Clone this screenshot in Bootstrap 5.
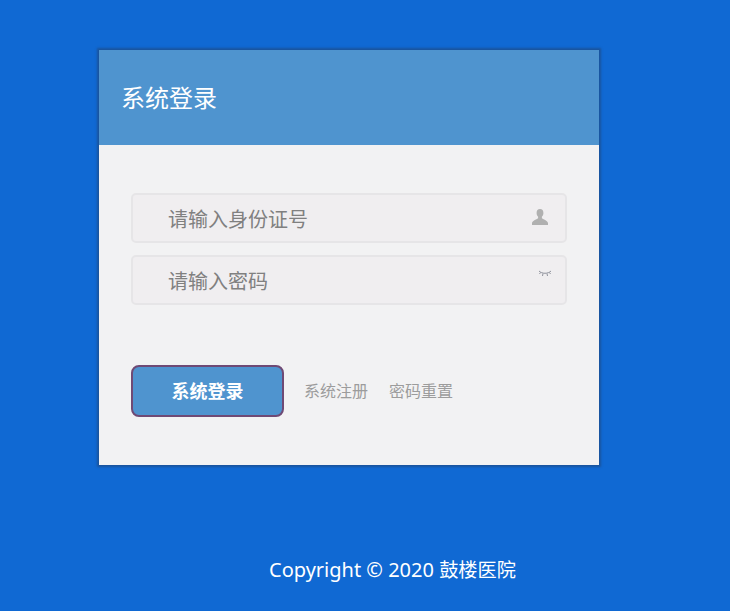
<!DOCTYPE html>
<html lang="zh-CN">
<head>
<meta charset="utf-8">
<title>系统登录</title>
<link rel="stylesheet" href="https://cdn.jsdelivr.net/npm/bootstrap@5.3.0/dist/css/bootstrap.min.css">
<style>
html,body{height:100%;}
body{background:#1069d3;font-family:"Noto Sans","Noto Sans CJK SC",sans-serif;overflow:hidden;}
.login-stage{padding-top:50px;}
.login-panel{width:500px;height:415px;margin-left:99px;background:#f2f2f3;border:0;border-radius:0;box-shadow:0 0 2px 2px rgba(30,75,135,.7);}
.login-panel .login-head{height:95px;background:#4f94cf;color:#fff;font-size:24px;padding:1px 22px 0;border-radius:0;border:0;}
.login-body{padding:48px 32px 0;}
.field-box{height:50px;background:#f0eef0;border:2px solid #e6e5e7;border-radius:5px;padding:0 17px 0 35px;margin-bottom:12px;}
.field-input{background:transparent;border:0;outline:0;padding:3px 0 0;flex:1;min-width:0;font-size:20px;color:#808080;font-family:inherit;}
.field-input::placeholder{color:#808080;opacity:1;}
.icon-user{width:16px;height:16px;margin-top:-2px;}
.icon-eye{width:14px;height:7px;margin-top:-13px;margin-right:-4px;}
.login-actions{margin-top:60px;gap:21px;}
.btn-login{width:153px;height:52px;background:#4f94cf;border:2px solid #6f4a75;border-radius:8px;color:#fff;font-size:18px;font-weight:700;padding:0;margin-right:-1px;}
.link-aux{color:#9c9c9c;font-size:16px;text-decoration:none;}
.copy-line{margin-top:88px;padding-left:269px;color:#fff;font-size:20px;line-height:34px;}
.copy-cjk{font-size:19.2px;}
</style>
</head>
<body>
<div class="login-stage">
  <div class="card login-panel">
    <div class="card-header login-head d-flex align-items-center">系统登录</div>
    <div class="login-body">
      <div class="field-box d-flex align-items-center">
        <input class="field-input" type="text" placeholder="请输入身份证号">
        <svg class="icon-user" viewBox="0 0 16 16"><path fill="#b0b0b0" d="M8 0c2.300 0 3.400 1.700 3.400 3.900 0 1.600-.7 3-1.500 3.800v1.500c.6.7 6.100 2.300 6.100 5.100V16H0v-1.700c0-2.800 5.500-4.400 6.100-5.100V7.700C5.300 6.900 4.600 5.500 4.600 3.900 4.600 1.700 5.700 0 8 0z"/></svg>
      </div>
      <div class="field-box d-flex align-items-center">
        <input class="field-input" type="password" placeholder="请输入密码">
        <svg class="icon-eye" viewBox="0 0 14 7"><path fill="none" stroke="#8f929c" stroke-width="1" d="M1 1c3 3 9 3 12 0M2.500 2.500L1.500 4M5 3.500L4.500 6M9 3.500L9.500 6M11.500 2.500L12.500 4"/></svg>
      </div>
      <div class="login-actions d-flex align-items-center">
        <button class="btn btn-login" type="button">系统登录</button>
        <a class="link-aux" href="#">系统注册</a>
        <a class="link-aux" href="#">密码重置</a>
      </div>
    </div>
  </div>
  <div class="copy-line">Copyright © 2020 <span class="copy-cjk">鼓楼医院</span></div>
</div>
</body>
</html>
